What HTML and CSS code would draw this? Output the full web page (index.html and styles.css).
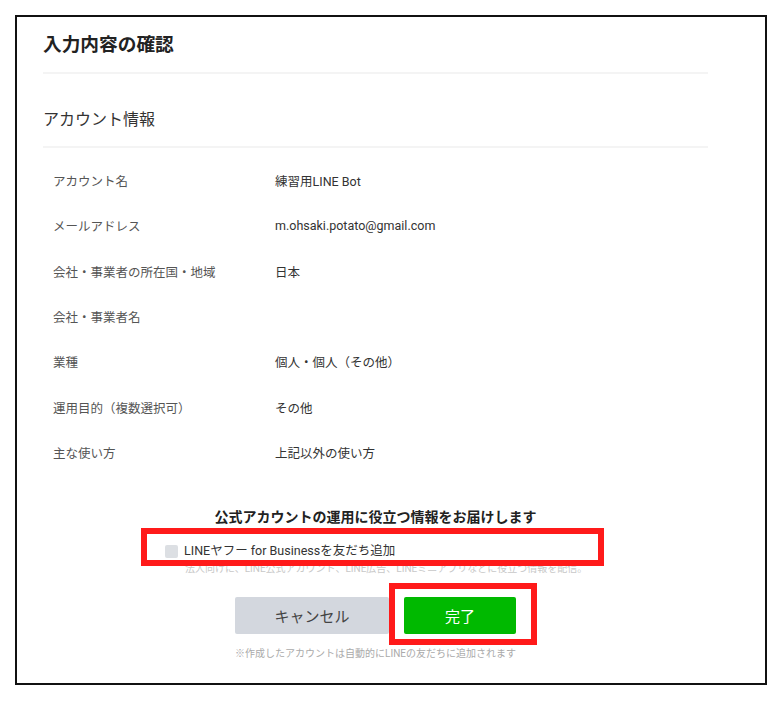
FILE: index.html
```html
<!DOCTYPE html>
<html lang="ja">
<head>
    <meta charset="UTF-8">
    <meta name="viewport" content="width=device-width, initial-scale=1.0">
    <title>入力内容の確認</title>
    <link rel="stylesheet" href="styles.css">
</head>
<body>
    <div class="frame">
        <div class="content">
            <h1 class="page-title">入力内容の確認</h1>
            <hr class="divider">
            <h2 class="section-title">アカウント情報</h2>
            <hr class="divider">
            <div class="info-list">
                <div class="info-row"><div class="label">アカウント名</div><div class="value">練習用LINE Bot</div></div>
                <div class="info-row"><div class="label">メールアドレス</div><div class="value">m.ohsaki.potato@gmail.com</div></div>
                <div class="info-row"><div class="label">会社・事業者の所在国・地域</div><div class="value">日本</div></div>
                <div class="info-row"><div class="label">会社・事業者名</div><div class="value"></div></div>
                <div class="info-row"><div class="label">業種</div><div class="value">個人・個人（その他）</div></div>
                <div class="info-row"><div class="label">運用目的（複数選択可）</div><div class="value">その他</div></div>
                <div class="info-row"><div class="label">主な使い方</div><div class="value">上記以外の使い方</div></div>
            </div>

            <div class="notice-title">公式アカウントの運用に役立つ情報をお届けします</div>
            <div class="highlight check-box-area">
                <span class="checkbox"></span>
                <span class="check-label">LINEヤフー for Businessを友だち追加</span>
            </div>
            <div class="check-note">法人向けに、LINE公式アカウント、LINE広告、LINEミニアプリなどに役立つ情報を配信。</div>

            <div class="buttons">
                <button class="btn btn-cancel">キャンセル</button>
                <div class="highlight done-wrap">
                    <button class="btn btn-done">完了</button>
                </div>
            </div>
            <div class="footnote">※作成したアカウントは自動的にLINEの友だちに追加されます</div>
        </div>
    </div>
</body>
</html>
```

FILE: styles.css
```css
body {
    margin: 0;
    background-color: #ffffff;
    font-family: Roboto, "Noto Sans CJK JP", sans-serif;
    color: #333;
}
.frame {
    box-sizing: border-box;
    margin: 15px 0 0 15px;
    width: 752px;
    height: 670px;
    border: 2px solid #111;
    background: #fff;
}
.content {
    margin-left: 26px;
    width: 665px;
    padding-top: 16px;
}
.page-title {
    margin: 0;
    font-size: 18.7px;
    line-height: 24px;
    font-weight: bold;
    color: #222;
}
.divider {
    margin: 0;
    border: none;
    height: 2px;
    background-color: #f4f4f4;
}
.page-title + .divider {
    margin-top: 15px;
}
.section-title {
    margin: 34px 0 14px;
    font-size: 16px;
    line-height: 24px;
    font-weight: normal;
    color: #333;
}
.info-list {
    margin-top: 10px;
}
.info-row {
    display: flex;
    align-items: center;
    height: 45.3px;
    font-size: 12.5px;
}
.label {
    width: 222px;
    padding-left: 10px;
    color: #555;
}
.value {
    color: #333;
}
.notice-title {
    margin-top: 32px;
    text-align: center;
    font-size: 14px;
    line-height: 20px;
    font-weight: bold;
    color: #222;
}
.highlight {
    box-sizing: border-box;
    border: 6px solid #ff1a1a;
    position: relative;
    z-index: 1;
}
.check-box-area {
    margin: 1px 0 0 98px;
    width: 463px;
    height: 38px;
    display: flex;
    align-items: center;
    padding: 8px 0 0 18px;
}
.checkbox {
    width: 13px;
    height: 13px;
    border-radius: 2px;
    background-color: #dcdfe3;
}
.check-label {
    margin-left: 6px;
    font-size: 12.5px;
    line-height: 18px;
    color: #333;
}
.check-note {
    margin-top: -4px;
    padding-left: 142px;
    font-size: 10px;
    line-height: 14px;
    color: #c8c8c8;
}
.buttons {
    display: flex;
    align-items: flex-start;
    margin-top: 7px;
    padding-left: 192px;
}
.btn {
    border: none;
    border-radius: 2px;
    height: 37px;
    font-family: inherit;
    font-size: 15px;
    cursor: pointer;
}
.btn-cancel {
    margin-top: 14px;
    width: 154px;
    background-color: #d3d7de;
    color: #444;
}
.done-wrap {
    padding: 8px 15px 5px 9px;
    background: #fff;
}
.btn-done {
    display: block;
    width: 112px;
    background-color: #00b900;
    color: #fff;
}
.footnote {
    margin-top: 2px;
    text-align: center;
    font-size: 10px;
    line-height: 14px;
    color: #aaa;
}
```
